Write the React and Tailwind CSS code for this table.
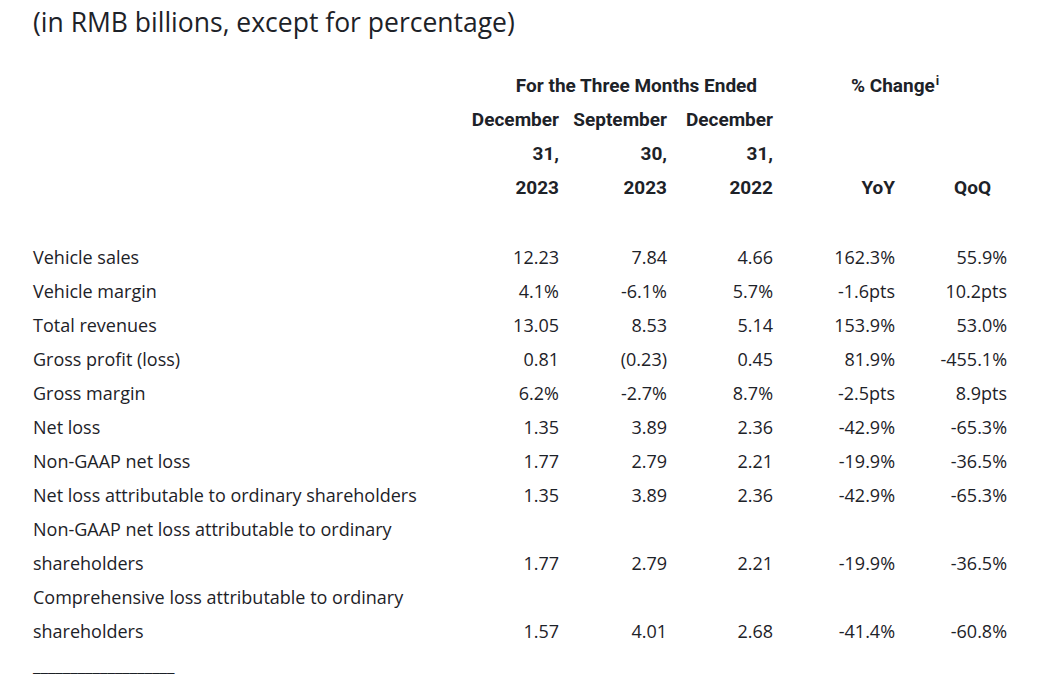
import React from 'react';

const ROWS = [
  ['Vehicle sales', '12.23', '7.84', '4.66', '162.3%', '55.9%'],
  ['Vehicle margin', '4.1%', '-6.1%', '5.7%', '-1.6pts', '10.2pts'],
  ['Total revenues', '13.05', '8.53', '5.14', '153.9%', '53.0%'],
  ['Gross profit (loss)', '0.81', '(0.23)', '0.45', '81.9%', '-455.1%'],
  ['Gross margin', '6.2%', '-2.7%', '8.7%', '-2.5pts', '8.9pts'],
  ['Net loss', '1.35', '3.89', '2.36', '-42.9%', '-65.3%'],
  ['Non-GAAP net loss', '1.77', '2.79', '2.21', '-19.9%', '-36.5%'],
  ['Net loss attributable to ordinary shareholders', '1.35', '3.89', '2.36', '-42.9%', '-65.3%'],
  ['Non-GAAP net loss attributable to ordinary shareholders', '1.77', '2.79', '2.21', '-19.9%', '-36.5%'],
  ['Comprehensive loss attributable to ordinary shareholders', '1.57', '4.01', '2.68', '-41.4%', '-60.8%'],
];

const bodyFont = { fontFamily: '"Open Sans", "Noto Sans", sans-serif' };
const headFont = { fontFamily: 'Roboto, "Noto Sans", sans-serif' };

export default function App() {
  return (
    <div className="min-h-screen bg-white text-[#1d2228] pl-[33px]" style={bodyFont}>
      <h1 className="text-[26.5px] leading-[44px] font-normal">(in RMB billions, except for percentage)</h1>

      <table className="table-fixed border-collapse mt-[25px] w-[974px] text-[18px]">
        <colgroup>
          <col className="w-[427px]" />
          <col className="w-[99px]" />
          <col className="w-[108px]" />
          <col className="w-[106px]" />
          <col className="w-[122px]" />
          <col className="w-[112px]" />
        </colgroup>
        <thead className="font-bold text-[19px]" style={headFont}>
          <tr className="h-[34px]">
            <th />
            <th colSpan={3} className="text-right pr-[16px] font-bold">For the Three Months Ended</th>
            <th colSpan={2} className="text-left pl-[78px] font-bold whitespace-nowrap">
              % Change<span className="text-[13px] relative -top-[7px] ml-[1px]">i</span>
            </th>
          </tr>
          <tr className="h-[34px]">
            <th />
            <th className="text-right font-bold">December</th>
            <th className="text-right font-bold">September</th>
            <th className="text-right font-bold">December</th>
            <th />
            <th />
          </tr>
          <tr className="h-[34px]">
            <th />
            <th className="text-right font-bold">31,</th>
            <th className="text-right font-bold">30,</th>
            <th className="text-right font-bold">31,</th>
            <th />
            <th />
          </tr>
          <tr className="h-[34px]">
            <th />
            <th className="text-right font-bold">2023</th>
            <th className="text-right font-bold">2023</th>
            <th className="text-right font-bold">2022</th>
            <th className="text-right font-bold">YoY</th>
            <th className="text-right pr-[16px] font-bold">QoQ</th>
          </tr>
          <tr className="h-[35px]">
            <th colSpan={6} />
          </tr>
        </thead>
        <tbody className="leading-[34px]">
          {ROWS.map(([label, ...vals]) => (
            <tr key={label}>
              <td className="pr-[20px] align-top">{label}</td>
              {vals.map((v, i) => (
                <td key={i} className="text-right align-bottom">{v}</td>
              ))}
            </tr>
          ))}
        </tbody>
      </table>

      <p className="text-[17px] leading-[18px] mt-[9px]">___________________</p>
    </div>
  );
}
